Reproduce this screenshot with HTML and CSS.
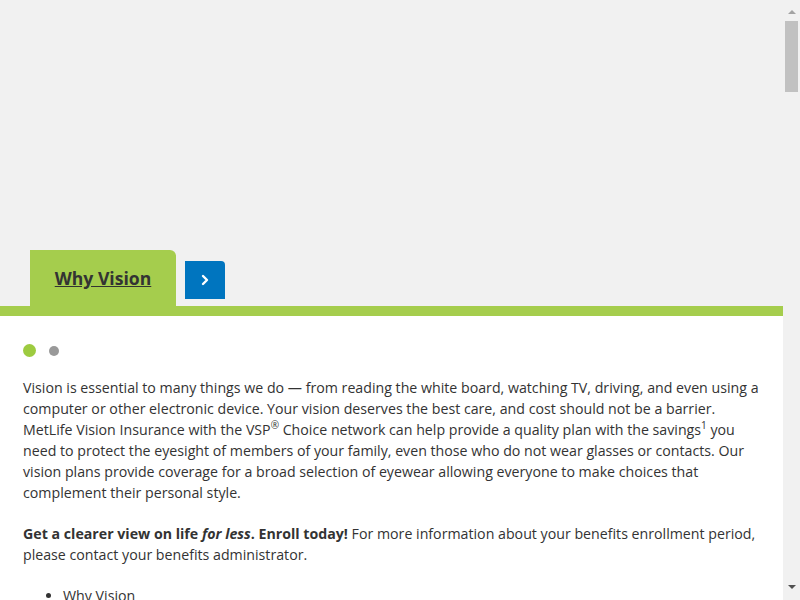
FILE: index.html
```html
<!DOCTYPE html>
<html>

<head>
  <link rel="stylesheet" href="styles.css">
</head>

<body>
  <div class="page">
    <div class="hero"></div>

    <div class="tabs">
      <a class="tab" href="#why-vision">Why Vision</a>
      <button class="tab-next" aria-label="Next">
        <svg width="12" height="12" viewBox="0 0 12 12">
          <path d="M4 2 L8 6 L4 10" fill="none" stroke="#fff" stroke-width="2.4" stroke-linecap="round" stroke-linejoin="round"/>
        </svg>
      </button>
    </div>

    <div class="panel">
      <div class="dots">
        <span class="dot active"></span>
        <span class="dot"></span>
      </div>

      <p>Vision is essential to many things we do — from reading the white board, watching TV, driving, and even using a computer or other electronic device. Your vision deserves the best care, and cost should not be a barrier. MetLife Vision Insurance with the VSP<sup>®</sup> Choice network can help provide a quality plan with the savings<sup>1</sup> you need to protect the eyesight of members of your family, even those who do not wear glasses or contacts. Our vision plans provide coverage for a broad selection of eyewear allowing everyone to make choices that complement their personal style.</p>

      <p><strong>Get a clearer view on life <em>for less</em>. Enroll today!</strong> For more information about your benefits enrollment period, please contact your benefits administrator.</p>

      <ul class="links">
        <li>Why Vision</li>
        <li>Plan Details</li>
        <li>Find a Provider</li>
      </ul>
    </div>
  </div>

  <div class="scrollbar">
    <span class="arrow up"></span>
    <span class="thumb"></span>
    <span class="track"></span>
    <span class="arrow down"></span>
  </div>
</body>

</html>
```

FILE: styles.css
```css
body {
  display: flex;
  align-items: flex-start;
  margin: 0;
  height: 100vh;
  overflow: hidden;
  background: #f1f1f1;
  font-family: "Open Sans", sans-serif;
  color: #333;
}

.page {
  flex: 1;
  min-width: 0;
}

.hero {
  height: 250px;
}

.tabs {
  display: flex;
  align-items: flex-start;
  gap: 9px;
  padding-left: 30px;
  height: 56px;
}
.tab {
  display: block;
  width: 146px;
  height: 56px;
  line-height: 57px;
  text-align: center;
  background: #a5cd4d;
  border-radius: 0 6px 0 0;
  color: #333;
  font-size: 17.6px;
  font-weight: 700;
  text-decoration: underline;
}
.tab-next {
  display: flex;
  align-items: center;
  justify-content: center;
  width: 40px;
  height: 38px;
  margin-top: 11px;
  padding: 0;
  border: 0;
  border-radius: 0 4px 0 0;
  background: #0075bf;
}

.panel {
  background: #fff;
  border-top: 10px solid #a5cd4d;
  padding: 28px 23px 40px;
  font-size: 14.2px;
  line-height: 21px;
}

.dots {
  display: flex;
  align-items: center;
  gap: 13px;
  height: 13px;
}
.dot {
  width: 10px;
  height: 10px;
  border-radius: 50%;
  background: #999;
}
.dot.active {
  width: 13px;
  height: 13px;
  background: #9dcb40;
}

.panel p {
  margin: 20px 0 0;
}
.panel sup {
  font-size: 10px;
  line-height: 0;
}

.links {
  margin: 20px 0 0;
  padding-left: 40px;
}

/* stand-in for the window scrollbar */
.scrollbar {
  display: flex;
  flex-direction: column;
  align-items: center;
  flex: 0 0 17px;
  height: 100vh;
  background: #f1f1f1;
}
.arrow {
  width: 0;
  height: 0;
  border-left: 4px solid transparent;
  border-right: 4px solid transparent;
  flex: 0 0 4px;
  margin: 6px 0 7px;
}
.arrow.up {
  border-bottom: 4px solid #a3a3a3;
}
.arrow.down {
  border-top: 4px solid #505050;
}
.thumb {
  flex: 0 0 71px;
  width: 13px;
  background: #c1c1c1;
}
.track {
  flex: 1;
}
```
